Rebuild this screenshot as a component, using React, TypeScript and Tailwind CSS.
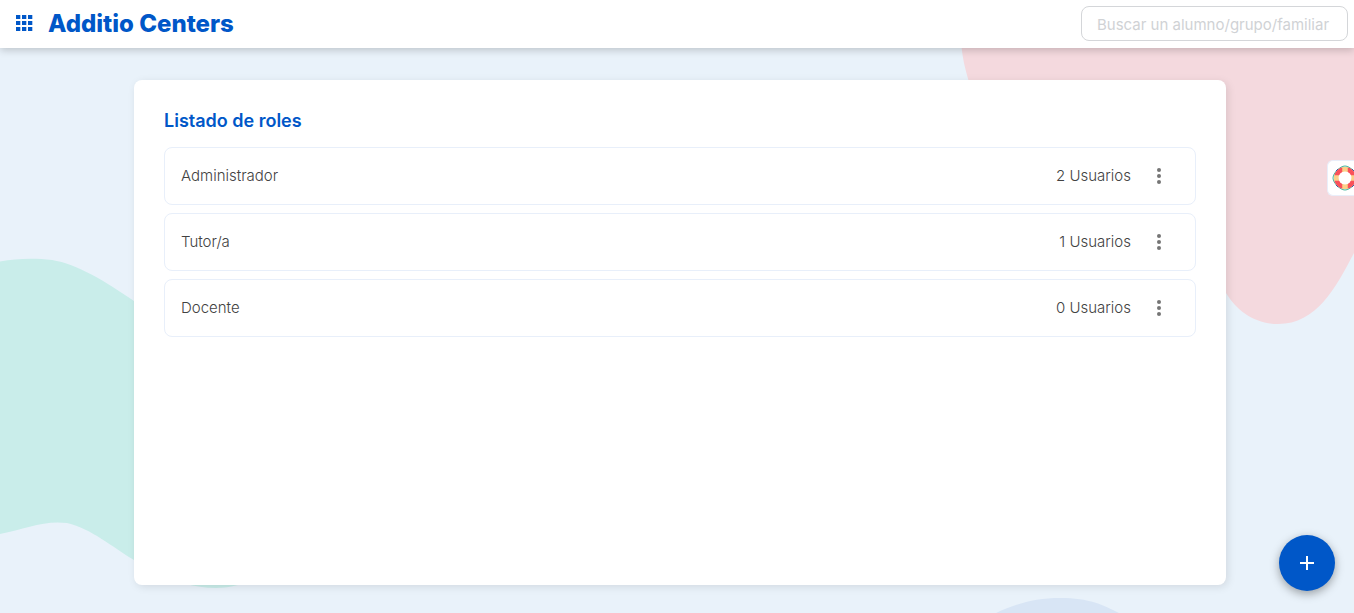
import { useState } from "react";

type Role = {
  id: number;
  name: string;
  users: number;
};

const roles: Role[] = [
  { id: 1, name: "Administrador", users: 2 },
  { id: 2, name: "Tutor/a", users: 1 },
  { id: 3, name: "Docente", users: 0 },
];

// decorative blobs behind the page
function Background() {
  return (
    <svg
      className="absolute inset-0 -z-10 h-full w-full"
      viewBox="0 0 1354 613"
      preserveAspectRatio="xMidYMid slice"
      aria-hidden="true"
    >
      <path
        d="M0 261.500C18 258 36 258 52 260C77 264 105 281 134 301L260 380V570C245 592 208 590 186 584C165 578 150 570 134 560C112 547 92 529 67 523C44 520 25 529 0 534Z"
        fill="#c9edea"
      />
      <path
        d="M961 40C964 100 1010 180 1080 210C1160 235 1200 250 1226 293C1237 311 1255 324 1278 324C1317 324 1336 287 1354 253V40Z"
        fill="#f4d9de"
      />
      <path d="M996 613C1015 604 1035 598 1060 598C1090 598 1103 605 1119 613Z" fill="#d8e5f5" />
    </svg>
  );
}

function AppsIcon() {
  return (
    <svg width="17" height="18" viewBox="0 0 17 18" fill="#0057c8" aria-hidden="true">
      {[0, 6, 12].map((y) => [0, 6, 12].map((x) => <rect key={`${x}-${y}`} x={x} y={y} width="4.300" height="4" />))}
    </svg>
  );
}

function MoreIcon() {
  return (
    <svg width="24" height="24" viewBox="0 0 24 24" fill="#757575" aria-hidden="true">
      <circle cx="12" cy="6" r="2" />
      <circle cx="12" cy="12" r="2" />
      <circle cx="12" cy="18" r="2" />
    </svg>
  );
}

function LifebuoyIcon() {
  return (
    <svg width="26" height="26" viewBox="0 0 26 26" fill="none" className="shrink-0" aria-hidden="true">
      <path
        d="M5 5C8 3 10 1 13 1S18 3 21 5C23 8 25 10 25 13S23 18 21 21C18 23 16 25 13 25S8 23 5 21C3 18 1 16 1 13S3 8 5 5Z"
        stroke="#3fb59b"
        strokeWidth="1"
      />
      <circle cx="13" cy="13" r="8.700" stroke="#f9515a" strokeWidth="4.600" />
      <path d="M13 2V7M13 19V24M2 13H7M19 13H24" stroke="#fbd08a" strokeWidth="5.500" />
      <circle cx="13" cy="13" r="6.400" fill="#fff" />
      <path d="M4 6L6 4M20 4L22 6M22 20L20 22M6 22L4 20" stroke="#3367a8" strokeWidth="1" />
    </svg>
  );
}

function RoleRow({ role }: { role: Role }) {
  return (
    <li className="flex h-[58px] items-center rounded-lg border border-[#e8effa] pr-6 pl-4 text-[15px] font-light text-[#424242]">
      <span className="flex-1">{role.name}</span>
      <span>{role.users} Usuarios</span>
      <button type="button" aria-label="Opciones" className="ml-4 cursor-pointer">
        <MoreIcon />
      </button>
    </li>
  );
}

export default function App() {
  const [search, setSearch] = useState("");

  return (
    <div className="relative isolate flex min-h-screen flex-col overflow-hidden bg-[#e9f2fa] font-['Inter',sans-serif]">
      <Background />

      <header className="flex h-12 items-center bg-white pr-1.5 pb-px pl-4 shadow-[0_2px_8px_rgba(0,0,0,0.2)]">
        <button type="button" aria-label="Aplicaciones" className="cursor-pointer">
          <AppsIcon />
        </button>
        <a href="#" className="ml-[15px] text-2xl font-extrabold text-[#0057c8]">
          Additio Centers
        </a>
        <input
          type="text"
          aria-label="Buscar un alumno/grupo/familiar"
          placeholder="Buscar un alumno/grupo/familiar"
          value={search}
          onChange={(e) => setSearch(e.target.value)}
          className="ml-auto h-[35px] w-[267px] rounded-lg border border-[#d4d6d9] bg-white px-[15px] pt-0.5 text-[15px] outline-none placeholder:text-[#d0d2d5]"
        />
      </header>

      <main className="flex flex-1 flex-col pt-8 pr-32 pb-7 pl-[134px]">
        <section className="flex-1 rounded-lg bg-white px-[30px] pt-[29px] pb-8 shadow-[2px_2px_8px_rgba(0,0,0,0.1)]">
          <h1 className="text-lg leading-6 font-semibold text-[#0057c8]">Listado de roles</h1>
          <ul className="mt-3.5 flex flex-col gap-2">
            {roles.map((role) => (
              <RoleRow key={role.id} role={role} />
            ))}
          </ul>
        </section>
      </main>

      {/* help tab stuck to the right edge */}
      <button
        type="button"
        aria-label="Ayuda"
        className="absolute top-40 right-0 flex h-9 w-[27px] cursor-pointer items-center overflow-hidden rounded-l-md border border-r-0 border-[#e9eefa] bg-white pl-1"
      >
        <LifebuoyIcon />
      </button>

      <button
        type="button"
        aria-label="Añadir rol"
        className="absolute right-[19px] bottom-[22px] flex size-14 cursor-pointer items-center justify-center rounded-full bg-[#0057c8] shadow-[0_3px_10px_rgba(0,0,0,0.35)]"
      >
        <svg width="24" height="24" viewBox="0 0 24 24" fill="#fff" aria-hidden="true">
          <path d="M19 13H13V19H11V13H5V11H11V5H13V11H19Z" />
        </svg>
      </button>
    </div>
  );
}
